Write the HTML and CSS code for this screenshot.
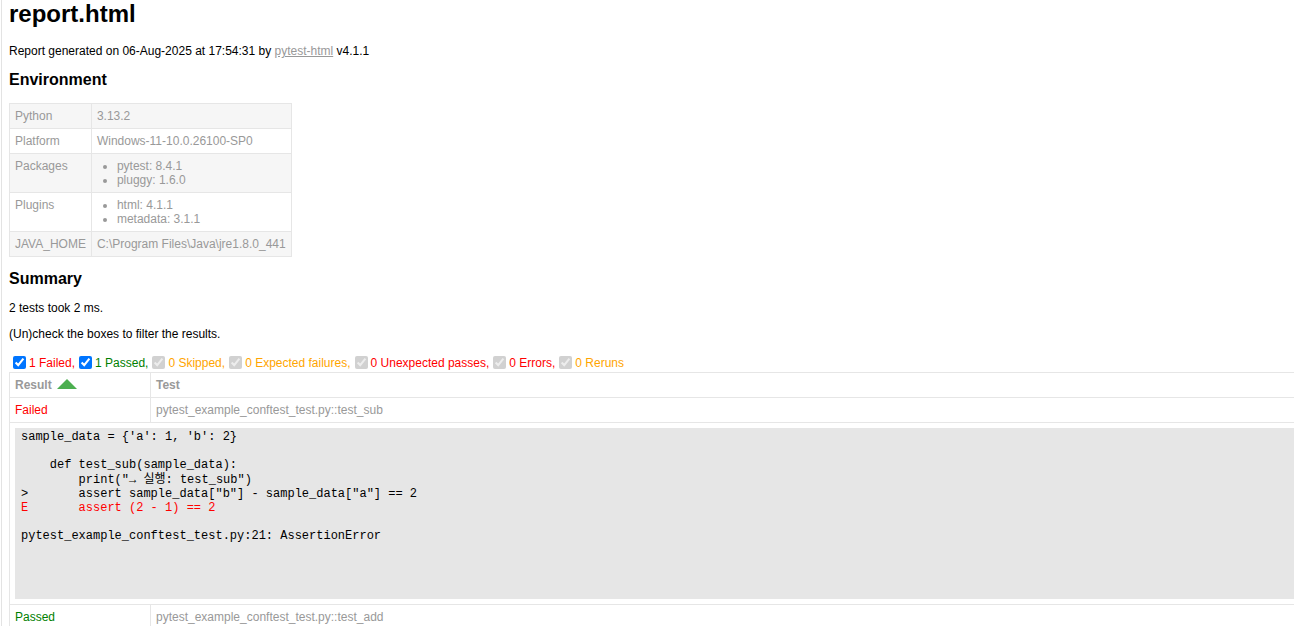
FILE: index.html
```html
<!DOCTYPE html>
<html lang="en">
<head>
<meta charset="utf-8">
<title>report.html</title>
<link rel="stylesheet" href="styles.css">
</head>
<body>
<h1 class="title">report.html</h1>
<p class="generated">Report generated on 06-Aug-2025 at 17:54:31 by <a href="#" class="link">pytest-html</a> v4.1.1</p>

<h2 class="section-title">Environment</h2>
<table class="environment">
  <tr><td>Python</td><td>3.13.2</td></tr>
  <tr><td>Platform</td><td>Windows-11-10.0.26100-SP0</td></tr>
  <tr><td>Packages</td><td><ul class="env-list"><li>pytest: 8.4.1</li><li>pluggy: 1.6.0</li></ul></td></tr>
  <tr><td>Plugins</td><td><ul class="env-list"><li>html: 4.1.1</li><li>metadata: 3.1.1</li></ul></td></tr>
  <tr><td>JAVA_HOME</td><td>C:\Program Files\Java\jre1.8.0_441</td></tr>
</table>

<h2 class="section-title">Summary</h2>
<p class="run-count">2 tests took 2 ms.</p>
<p class="filter-hint">(Un)check the boxes to filter the results.</p>
<div class="filters">
  <input class="filter" type="checkbox" checked><span class="failed">1 Failed,</span>
  <input class="filter" type="checkbox" checked><span class="passed">1 Passed,</span>
  <input class="filter" type="checkbox" checked disabled><span class="skipped">0 Skipped,</span>
  <input class="filter" type="checkbox" checked disabled><span class="xfailed">0 Expected failures,</span>
  <input class="filter" type="checkbox" checked disabled><span class="xpassed">0 Unexpected passes,</span>
  <input class="filter" type="checkbox" checked disabled><span class="error">0 Errors,</span>
  <input class="filter" type="checkbox" checked disabled><span class="rerun">0 Reruns</span>
</div>

<table class="results-table">
  <thead>
    <tr class="results-header">
      <th class="col-result sortable asc">Result</th>
      <th class="col-name">Test</th>
    </tr>
  </thead>
  <tbody class="result-failed">
    <tr>
      <td class="col-result">Failed</td>
      <td class="col-name">pytest_example_conftest_test.py::test_sub</td>
    </tr>
    <tr class="extras-row">
      <td class="extra" colspan="2">
        <div class="logwrapper"><div class="log">sample_data = {'a': 1, 'b': 2}

    def test_sub(sample_data):
        print("→ 실행: test_sub")
&gt;       assert sample_data["b"] - sample_data["a"] == 2
<span class="error">E       assert (2 - 1) == 2</span>

pytest_example_conftest_test.py:21: AssertionError</div></div>
      </td>
    </tr>
  </tbody>
  <tbody class="result-passed">
    <tr>
      <td class="col-result">Passed</td>
      <td class="col-name">pytest_example_conftest_test.py::test_add</td>
    </tr>
  </tbody>
</table>
</body>
</html>
```

FILE: styles.css
```css
html {
  overflow: hidden;
  background: linear-gradient(to right, #fff 1px, #e3e3e3 1px, #e3e3e3 2px, #fff 2px) no-repeat;
  background-color: #fff;
}

body {
  font-family: "Liberation Sans", Helvetica, Arial, sans-serif;
  font-size: 12px;
  color: #999;
  margin: 0 0 8px 9px;
  width: 1400px;
}

.title {
  font-size: 24px;
  color: #000;
  margin: 0 0 16px 0;
}

.section-title {
  font-size: 16px;
  color: #000;
  margin: 13.28px 0;
}

p {
  color: #000;
  margin: 12px 0;
}

.link {
  color: #999;
}

table {
  border-collapse: collapse;
}

.environment td {
  padding: 5px;
  border: 1px solid #e6e6e6;
  vertical-align: top;
}

.environment tr:nth-child(odd) {
  background-color: #f6f6f6;
}

.env-list {
  margin: 0;
  padding: 0 20px;
}

.filters {
  display: flex;
  align-items: center;
}

.filter {
  margin: 3px 3px 3px 4px;
  width: 13px;
  height: 13px;
}

span.passed,
.result-passed .col-result {
  color: green;
}

span.skipped,
span.xfailed,
span.rerun {
  color: orange;
}

span.error,
span.failed,
span.xpassed,
.result-failed .col-result {
  color: red;
}

.results-table {
  border: 1px solid #e6e6e6;
  color: #999;
  font-size: 12px;
  width: 100%;
}

.results-table th,
.results-table td {
  padding: 5px;
  border: 1px solid #e6e6e6;
  text-align: left;
}

.results-table th {
  font-weight: bold;
}

.results-table .col-result {
  width: 130px;
}

.sortable.asc::after {
  content: "";
  display: inline-block;
  vertical-align: baseline;
  margin-left: 5px;
  border: 10px solid #4caf50;
  border-top: 0;
  border-left-color: transparent;
  border-right-color: transparent;
}

.logwrapper {
  height: 171px;
  overflow: hidden;
  background-color: #e6e6e6;
}

.log {
  border: 1px solid #e6e6e6;
  color: #000;
  font-family: "Liberation Mono", "Courier New", Courier, "Noto Sans CJK KR", monospace;
  font-size: 12px;
  line-height: 14.15px;
  padding: 1px 5px 5px 5px;
  white-space: pre-wrap;
}

.log .error {
  color: red;
}
```
